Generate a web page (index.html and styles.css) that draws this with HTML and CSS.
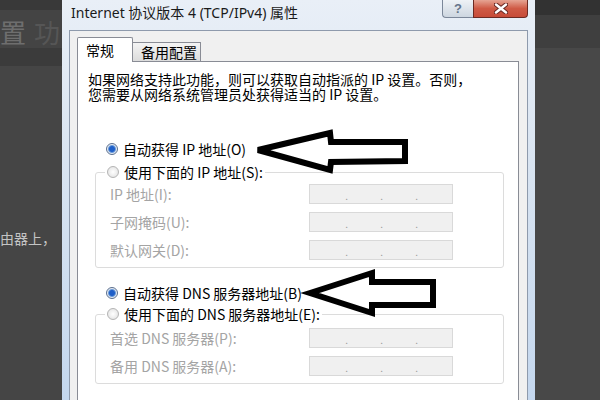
FILE: index.html
```html
<!DOCTYPE html>
<html>
<head>
    <title>Internet 协议版本 4 (TCP/IPv4) 属性</title>
    <link rel="stylesheet" href="styles.css">
</head>
<body>
    <div class="desk">
        <div class="side left">
            <div class="band"><span class="big">置</span><span class="big dim">功</span></div>
            <p class="behind">由器上，</p>
        </div>

        <div class="dialog">
            <div class="titlebar">
                <span class="title">Internet 协议版本 4 (TCP/IPv4) 属性</span>
                <div class="caption">
                    <span class="cap help">?</span>
                    <span class="cap close">
                        <svg width="14" height="11" viewBox="0 0 14 11">
                            <path d="M2 1.5 L12 9.5 M12 1.5 L2 9.5" stroke="#6b2a24" stroke-width="4.5" stroke-linecap="round"/>
                            <path d="M2 1.5 L12 9.5 M12 1.5 L2 9.5" stroke="#ffffff" stroke-width="2.4" stroke-linecap="round"/>
                        </svg>
                    </span>
                </div>
            </div>

            <div class="client">
                <div class="tabs">
                    <span class="tab active">常规</span>
                    <span class="tab">备用配置</span>
                </div>
                <div class="page">
                    <p class="intro">如果网络支持此功能，则可以获取自动指派的 IP 设置。否则，<br>您需要从网络系统管理员处获得适当的 IP 设置。</p>

                    <label class="radio first"><span class="dot on"></span>自动获得 IP 地址(O)</label>
                    <fieldset class="group">
                        <legend><label class="radio"><span class="dot"></span>使用下面的 IP 地址(S):</label></legend>
                        <div class="row"><span class="lbl">IP 地址(I):</span><span class="ip"><i>.</i><i>.</i><i>.</i></span></div>
                        <div class="row"><span class="lbl">子网掩码(U):</span><span class="ip"><i>.</i><i>.</i><i>.</i></span></div>
                        <div class="row"><span class="lbl">默认网关(D):</span><span class="ip"><i>.</i><i>.</i><i>.</i></span></div>
                    </fieldset>

                    <label class="radio second"><span class="dot on"></span>自动获得 DNS 服务器地址(B)</label>
                    <fieldset class="group dns">
                        <legend><label class="radio"><span class="dot"></span>使用下面的 DNS 服务器地址(E):</label></legend>
                        <div class="row"><span class="lbl">首选 DNS 服务器(P):</span><span class="ip"><i>.</i><i>.</i><i>.</i></span></div>
                        <div class="row"><span class="lbl">备用 DNS 服务器(A):</span><span class="ip"><i>.</i><i>.</i><i>.</i></span></div>
                    </fieldset>
                </div>
            </div>
        </div>

        <div class="side right"></div>

        <!-- hand drawn arrows laid over the dialog -->
        <svg class="arrows" width="600" height="400" viewBox="0 0 600 400">
            <polygon points="258,150 330,133 331,142 405,142 405,161 331,162 330,170" />
            <polygon points="310,293 372,273 372,282 433,282 433,305 372,305 372,313" />
        </svg>
    </div>
</body>
</html>
```

FILE: styles.css
```css
/* fundo escuro com a janela de propriedades no meio */
body {
    margin: 0;
    font-family: "Noto Sans CJK SC", sans-serif;
}

.desk {
    position: relative;
    display: flex;
    width: 600px;
    height: 400px;
    overflow: hidden;
    background-color: #474747;
}

.side.left {
    width: 62px;
    background-color: #454545;
}

.left .band {
    height: 66px;
    background: linear-gradient(#393939 0 10px, #444444 10px 48px, #3b3b3b 48px);
    display: flex;
    align-items: center;
    overflow: hidden;
    white-space: nowrap;
}

.big {
    font-size: 26px;
    color: #6e6e6e;
    margin-top: -4px;
}

.big.dim {
    color: #565656;
    margin-left: 8px;
}

.behind {
    margin: 164px 0 0 0;
    font-size: 14px;
    line-height: 16px;
    color: #c4c4c4;
    white-space: nowrap;
}

.side.right {
    flex: 1;
    background: linear-gradient(#323232 0 15px, #3f3f3f 15px 48px, #484848 48px);
}

.dialog {
    width: 473px;
    box-sizing: border-box;
    padding: 0 7px;
    background: linear-gradient(#e9eff7, #d9e4f1 40%, #c4d7ee);
}

.titlebar {
    height: 30px;
    display: flex;
    align-items: flex-start;
}

.title {
    font-family: "Noto Sans", "Noto Sans CJK SC", sans-serif;
    font-size: 14px;
    line-height: 26px;
    padding-left: 2px;
    color: #1a1a1a;
}

.caption {
    margin-left: auto;
    display: flex;
}

.cap {
    height: 18px;
    box-sizing: border-box;
    border: 1px solid #7b8799;
    border-top: none;
    display: flex;
    align-items: center;
    justify-content: center;
}

.help {
    width: 31px;
    border-right: none;
    border-radius: 0 0 0 4px;
    background: linear-gradient(#eef2f6, #cdd6e0);
    font-family: "Liberation Sans", sans-serif;
    font-weight: bold;
    font-size: 13px;
    color: #64748a;
}

.close {
    width: 55px;
    border-color: #6c2a22;
    border-radius: 0 0 4px 0;
    background: linear-gradient(#e6a493, #cf5a45 50%, #c74b38);
}

.client {
    height: 400px;
    background-color: #f0f0f0;
    border: 1px solid #8e9aac;
    padding: 6px 8px 0 7px;
}

.tabs {
    display: flex;
    align-items: flex-end;
    height: 25px;
    position: relative;
    z-index: 1;
}

.tab {
    height: 19px;
    width: 68px;
    box-sizing: border-box;
    margin-bottom: 1px;
    padding-left: 8px;
    border: 1px solid #898c95;
    border-left: none;
    border-bottom: none;
    background: linear-gradient(#f4f4f4, #dcdcdc);
    font-size: 14px;
    line-height: 18px;
}

.tab.active {
    height: 25px;
    width: 56px;
    margin-bottom: 0;
    border-left: 1px solid #898c95;
    border-radius: 2px 2px 0 0;
    background: #ffffff;
    line-height: 25px;
}

.page {
    height: 400px;
    margin-top: -1px;
    background-color: #ffffff;
    border: 1px solid #898c95;
}

.intro {
    margin: 10px 0 0 10px;
    font-size: 14px;
    line-height: 15px;
    color: #000;
}

.radio {
    display: flex;
    align-items: center;
    gap: 5px;
    height: 16px;
    font-size: 14px;
    color: #000;
    white-space: nowrap;
}

.radio.first {
    margin: 39px 0 0 28px;
}

.radio.second {
    margin: 17px 0 0 28px;
}

.dot {
    width: 12px;
    height: 12px;
    box-sizing: border-box;
    border-radius: 50%;
    border: 1px solid #b4b4b4;
    background: radial-gradient(circle, #ffffff, #dedede);
}

.dot.on {
    border-color: #5b6f8e;
    background: radial-gradient(circle, #1f5fc8 0 2.5px, #6b9ad8 3.5px, #e6edf5 4.5px, #f5f5f5);
}

.group {
    margin: 7px 14px 0 17px;
    padding: 4px 0 7px 0;
    border: 1px solid #dcdcdc;
    border-radius: 3px;
    min-width: 0;
}

.group.dns {
    margin-top: 5px;
    padding-top: 6px;
}

.group legend {
    padding: 0 2px;
    margin-left: 9px;
}

.row {
    display: flex;
    align-items: center;
    height: 20px;
    padding-left: 14px;
    font-size: 14px;
    color: #a4a4a4;
}

.row + .row {
    margin-top: 8px;
}

.lbl {
    width: 199px;
}

.ip {
    width: 144px;
    height: 20px;
    box-sizing: border-box;
    display: flex;
    padding-left: 3px;
    border: 1px solid #d9d9d9;
    background-color: #f0f0f0;
}

.ip i {
    width: 35px;
    text-align: right;
    font-style: normal;
    font-size: 10px;
    line-height: 22px;
    color: #9a9a9a;
}

.arrows {
    position: absolute;
    left: 0;
    top: 0;
    pointer-events: none;
}

.arrows polygon {
    fill: none;
    stroke: #000;
    stroke-width: 6;
    stroke-linejoin: miter;
}
```
